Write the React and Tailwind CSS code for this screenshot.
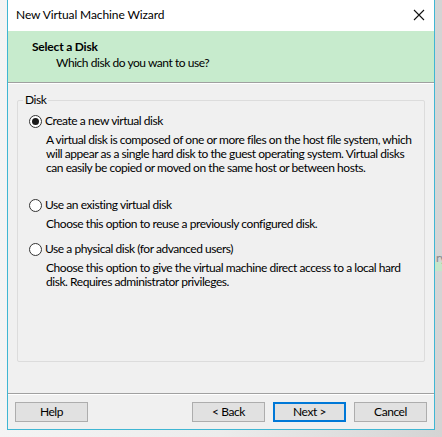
import { useState } from 'react';

const OPTIONS = [
  {
    value: 'new',
    label: 'Create a new virtual disk',
    lines: [
      'A virtual disk is composed of one or more files on the host file system, which',
      'will appear as a single hard disk to the guest operating system. Virtual disks',
      'can easily be copied or moved on the same host or between hosts.',
    ],
    gap: 'mb-[22px]',
  },
  {
    value: 'existing',
    label: 'Use an existing virtual disk',
    lines: ['Choose this option to reuse a previously configured disk.'],
    gap: 'mb-[10px]',
  },
  {
    value: 'physical',
    label: 'Use a physical disk (for advanced users)',
    lines: [
      'Choose this option to give the virtual machine direct access to a local hard',
      'disk. Requires administrator privileges.',
    ],
    gap: '',
  },
];

function Radio({ checked }) {
  return (
    <span className="flex h-[13px] w-[13px] shrink-0 items-center justify-center rounded-full border border-[#333333] bg-white">
      {checked && <span className="h-[7px] w-[7px] rounded-full bg-[#1a1a1a]" />}
    </span>
  );
}

function Button({ children, primary }) {
  return (
    <button
      type="button"
      className={`flex h-[20px] w-[73px] items-center justify-center bg-[#e1e1e1] text-[12px] text-black ${primary ? 'border-2 border-[#0078d7]' : 'border border-[#adadad]'}`}
    >
      {children}
    </button>
  );
}

export default function App() {
  const [choice, setChoice] = useState('new');

  return (
    <div className="relative flex h-[437px] w-[442px] overflow-hidden whitespace-nowrap bg-gradient-to-r from-[#f4f4f4] via-[#ececec] to-[#d4d4d4] font-['Lato','Liberation_Sans',sans-serif] text-[12px] tracking-[-0.45px] text-[#000000]">
      <div className="absolute right-0 top-[262px] h-[9px] w-[8px] bg-[#c5e6c9]" />
      <div className="absolute left-[436px] top-[249px] text-[12px] text-[#8a8a8a]">ry</div>

      <div className="relative z-10 ml-[7px] flex h-[430px] w-[428px] flex-col border-x border-b border-[#3fb6d3] bg-[#f0f0f0]">
        <div className="flex h-[31px] items-center justify-between bg-white pl-[8px] pr-[9px]">
          <span className="pb-[1px] text-[12px] tracking-[-0.1px]">New Virtual Machine Wizard</span>
          <svg width="12" height="12" viewBox="0 0 12 12" className="mb-[1px]">
            <path d="M1 1 L11 11 M11 1 L1 11" stroke="#111" strokeWidth="1.1" />
          </svg>
        </div>

        <div className="h-[51px] bg-[#c7ebcd] pl-[24px] pt-[8px]">
          <div className="text-[12px] font-bold leading-[16px] tracking-[-0.2px]">Select a Disk</div>
          <div className="pl-[24px] text-[12px] leading-[16px]">Which disk do you want to use?</div>
        </div>
        <div className="h-px bg-[#a0a0a0]" />
        <div className="h-px bg-white" />

        <div className="flex-1 px-[9px] pt-[16px]">
          <div className="relative h-[262px] w-[408px] rounded-[2px] border border-[#dcdcdc] pl-[11px] pt-[12px]">
            <span className="absolute -top-[9px] left-[5px] bg-[#f0f0f0] px-[2px] text-[12px] leading-[16px]">Disk</span>
            {OPTIONS.map((option) => (
              <div key={option.value} className={option.gap}>
                <label
                  className="flex cursor-default items-center gap-[3px] leading-[16px]"
                  onClick={() => setChoice(option.value)}
                >
                  <Radio checked={choice === option.value} />
                  <span>{option.label}</span>
                </label>
                <div className="mt-[4px] pl-[17px] leading-[14px]">
                  {option.lines.map((line) => (
                    <div key={line}>{line}</div>
                  ))}
                </div>
              </div>
            ))}
          </div>
        </div>

        <div className="h-px bg-[#a0a0a0]" />
        <div className="h-px bg-white" />
        <div className="flex h-[34px] items-start px-[7px] pt-[7px]">
          <Button>Help</Button>
          <div className="flex-1" />
          <div className="flex gap-[8px]">
            <Button>&lt; Back</Button>
            <Button primary>Next &gt;</Button>
            <Button>Cancel</Button>
          </div>
        </div>
      </div>
    </div>
  );
}
